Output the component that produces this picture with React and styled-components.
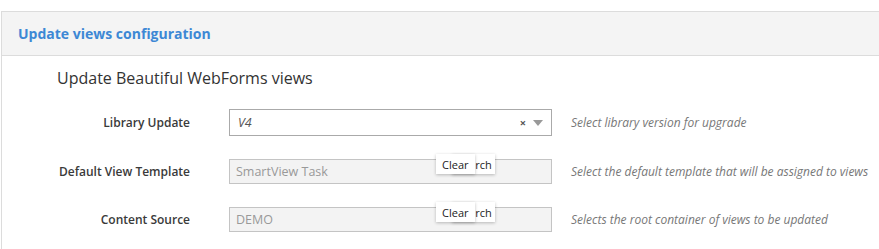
import React from 'react'
import styled, { createGlobalStyle } from 'styled-components'

const Global = createGlobalStyle`
  body {
    margin: 0;
    background: #fff;
    font-family: "Open Sans", "Liberation Sans", sans-serif;
  }
`;

const Page = styled.div`
  padding: 11px 0 0 1px;
  height: 249px;
  box-sizing: border-box;
  overflow: hidden;
`;

const Panel = styled.div`
  border: 1px solid #dcdcdc;
  border-right: none;
  border-bottom: none;
  height: 100%;
`;

const Header = styled.div`
  background: #f4f4f4;
  border-bottom: 1px solid #dcdcdc;
  height: 43px;
  display: flex;
  align-items: center;
  padding-left: 16px;
  font-size: 14px;
  font-weight: 700;
  color: #3d88d5;
`;

const Body = styled.div`
  padding: 11px 0 0 55px;
`;

const Title = styled.h3`
  margin: 0 0 20px;
  font-size: 16px;
  font-weight: 500;
  color: #333;
  line-height: 22px;
`;

const Rows = styled.div`
  display: flex;
  flex-direction: column;
  gap: 23px;
  margin-left: -55px;
`;

const Row = styled.div`
  display: grid;
  grid-template-columns: 188px 323px 1fr;
  align-items: center;
`;

const Label = styled.label`
  text-align: right;
  font-size: 12px;
  font-weight: 600;
  color: #3a3a3a;
`;

const Field = styled.div`
  position: relative;
  grid-column: 2;
  margin-left: 39px;
  width: 323px;
  height: ${p => (p.$tall ? 27 : 25)}px;
  box-sizing: border-box;
  border: 1px solid ${p => (p.$disabled ? '#c4c4c4' : '#aaa')};
  background: ${p => (p.$disabled ? '#f3f3f3' : '#fff')};
  display: flex;
  align-items: center;
  padding: 0 8px 0 ${p => (p.$disabled ? 6 : 8)}px;
  font-size: 12.5px;
  color: ${p => (p.$disabled ? '#999' : '#555')};
  font-style: ${p => (p.$italic ? 'italic' : 'normal')};
`;

const Value = styled.span`
  flex: 1;
`;

const ClearX = styled.span`
  font-size: 11px;
  font-weight: 700;
  color: #555;
  font-style: normal;
  margin-right: 7px;
`;

const Caret = styled.span`
  width: 0;
  height: 0;
  border-left: 5px solid transparent;
  border-right: 5px solid transparent;
  border-top: 6px solid #999;
`;

const Help = styled.div`
  padding-left: 58px;
  font-size: 12px;
  font-style: italic;
  color: #777;
  white-space: nowrap;
`;

const Tools = styled.div`
  position: absolute;
  top: -6px;
  left: 206px;
  width: 60px;
  height: 20px;
`;

const ToolButton = styled.span`
  position: absolute;
  top: 0;
  left: ${p => p.$left}px;
  height: 20px;
  box-sizing: border-box;
  padding: 0 ${p => p.$padR}px 0 ${p => p.$padL}px;
  display: flex;
  align-items: center;
  background: #fff;
  font-size: 11px;
  color: #222;
  font-style: normal;
  box-shadow: 0 1px 3px rgba(0, 0, 0, 0.25);
  z-index: ${p => p.$z};
`;

function FieldTools() {
  return (
    <Tools>
      <ToolButton $left={16} $padL={5} $padR={3} $z={1}>Search</ToolButton>
      <ToolButton $left={0} $padL={6} $padR={6} $z={2}>Clear</ToolButton>
    </Tools>
  )
}

export default function App() {
  return (
    <>
      <Global />
      <Page>
        <Panel>
          <Header>Update views configuration</Header>
          <Body>
            <Title>Update Beautiful WebForms views</Title>
            <Rows>
              <Row>
                <Label>Library Update</Label>
                <Field $tall $italic>
                  <Value>V4</Value>
                  <ClearX>×</ClearX>
                  <Caret />
                </Field>
                <Help>Select library version for upgrade</Help>
              </Row>
              <Row>
                <Label>Default View Template</Label>
                <Field $disabled>
                  <Value>SmartView Task</Value>
                  <FieldTools />
                </Field>
                <Help>Select the default template that will be assigned to views</Help>
              </Row>
              <Row>
                <Label>Content Source</Label>
                <Field $disabled>
                  <Value>DEMO</Value>
                  <FieldTools />
                </Field>
                <Help>Selects the root container of views to be updated</Help>
              </Row>
            </Rows>
          </Body>
        </Panel>
      </Page>
    </>
  )
}
